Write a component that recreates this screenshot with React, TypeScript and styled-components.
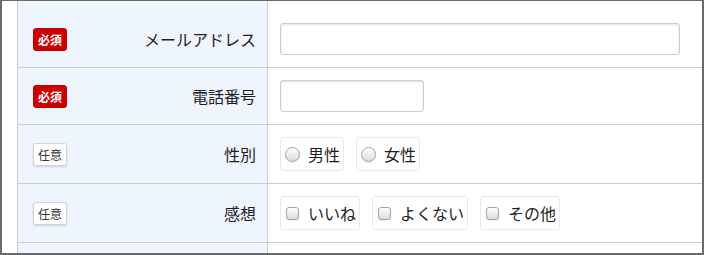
import React from 'react'
import styled, { createGlobalStyle } from 'styled-components'

const GlobalStyle = createGlobalStyle`
  html, body {
    margin: 0;
    padding: 0;
    background: #ffffff;
  }
  * {
    box-sizing: border-box;
  }
`

interface Field {
  label: string
  required: boolean
  kind: 'email' | 'tel' | 'radio' | 'checkbox'
  options?: string[]
}

const fields: Field[] = [
  { label: 'メールアドレス', required: true, kind: 'email' },
  { label: '電話番号', required: true, kind: 'tel' },
  { label: '性別', required: false, kind: 'radio', options: ['男性', '女性'] },
  { label: '感想', required: false, kind: 'checkbox', options: ['いいね', 'よくない', 'その他'] },
]

const App = () => {
  return (
    <>
      <GlobalStyle />
      <Frame>
        <FormTable>
          {/* 上にスクロールされた行の残り */}
          <Row height={10}>
            <HeadCell />
            <BodyCell />
          </Row>
          {fields.map((field, index) => (
            <Row key={index}>
              <HeadCell>
                <Badge required={field.required}>{field.required ? '必須' : '任意'}</Badge>
                <LabelText>{field.label}</LabelText>
              </HeadCell>
              <BodyCell>
                {field.kind === 'email' && <TextInput type="email" width={400} />}
                {field.kind === 'tel' && <TextInput type="tel" width={144} />}
                {(field.kind === 'radio' || field.kind === 'checkbox') && (
                  <Choices>
                    {field.options?.map((option) => (
                      <ChoiceBox key={option}>
                        {field.kind === 'radio' ? <Radio type="radio" name="gender" /> : <Check type="checkbox" />}
                        <ChoiceText wide={field.kind === 'checkbox'}>{option}</ChoiceText>
                      </ChoiceBox>
                    ))}
                  </Choices>
                )}
              </BodyCell>
            </Row>
          ))}
          <Row height={20}>
            <HeadCell />
            <BodyCell />
          </Row>
        </FormTable>
      </Frame>
    </>
  )
}

const Frame = styled.div`
  width: 704px;
  height: 255px;
  overflow: hidden;
  border-style: solid;
  border-color: #6a6a6a;
  border-width: 1px 2px 2px 2px;
  background: #ffffff;
  font-family: 'Noto Sans CJK JP', 'Noto Sans', sans-serif;
  color: #1e1e1e;
`
const FormTable = styled.div`
  margin-left: 15px;
  border-left: 1px solid #cccccc;
`
interface RowProp {
  height?: number
}
const Row = styled.div<RowProp>`
  display: grid;
  grid-template-columns: 250px 1fr;
  border-bottom: 1px solid #cccccc;
  height: ${(props) => (props.height ? `${props.height}px` : 'auto')};
`
const HeadCell = styled.div`
  display: flex;
  align-items: center;
  justify-content: space-between;
  padding: 0 11px 0 15px;
  background-color: #eef5ff;
  border-right: 1px solid #cccccc;
`
interface BadgeProp {
  required: boolean
}
const Badge = styled.span<BadgeProp>`
  display: inline-block;
  padding: 0 4px;
  height: 23px;
  line-height: 21px;
  font-size: 12px;
  border-radius: 3px;
  border: 1px solid ${(props) => (props.required ? '#cc0000' : '#d4d4d4')};
  background-color: ${(props) => (props.required ? '#cc0000' : '#ffffff')};
  color: ${(props) => (props.required ? '#ffffff' : '#333333')};
  font-weight: ${(props) => (props.required ? 700 : 400)};
  box-shadow: ${(props) => (props.required ? 'none' : '0 1px 2px rgba(0, 0, 0, 0.15)')};
`
const LabelText = styled.span`
  font-size: 16px;
  line-height: 20px;
`
const BodyCell = styled.div`
  display: flex;
  align-items: center;
  padding: 12px;
  background-color: #ffffff;
`
interface InputProp {
  width: number
}
const TextInput = styled.input<InputProp>`
  width: ${(props) => props.width}px;
  height: 32px;
  border: 1px solid #cccccc;
  border-radius: 3px;
  box-shadow: inset 0 1px 2px rgba(0, 0, 0, 0.12);
  background: #ffffff;
  outline: none;
`
const Choices = styled.div`
  display: flex;
  gap: 12px;
`
const ChoiceBox = styled.label`
  display: flex;
  align-items: center;
  height: 34px;
  padding: 0 3px 0 4px;
  border: 1px solid #eaeaea;
  border-radius: 3px;
  font-size: 16px;
`
const Radio = styled.input`
  appearance: none;
  margin: 0;
  width: 15px;
  height: 15px;
  border-radius: 50%;
  border: 1px solid #a3a3a3;
  background: linear-gradient(#ffffff, #dcdcdc);
  box-shadow: 0 1px 1px rgba(0, 0, 0, 0.08);
`
const Check = styled.input`
  appearance: none;
  margin: 1px 0 0 1px;
  width: 13px;
  height: 13px;
  border-radius: 3px;
  border: 1px solid #a3a3a3;
  background: linear-gradient(#ffffff, #dcdcdc);
  box-shadow: 0 1px 1px rgba(0, 0, 0, 0.08);
`
interface ChoiceTextProp {
  wide: boolean
}
const ChoiceText = styled.span<ChoiceTextProp>`
  margin-left: ${(props) => (props.wide ? '9px' : '8px')};
  line-height: 20px;
`
export default App
